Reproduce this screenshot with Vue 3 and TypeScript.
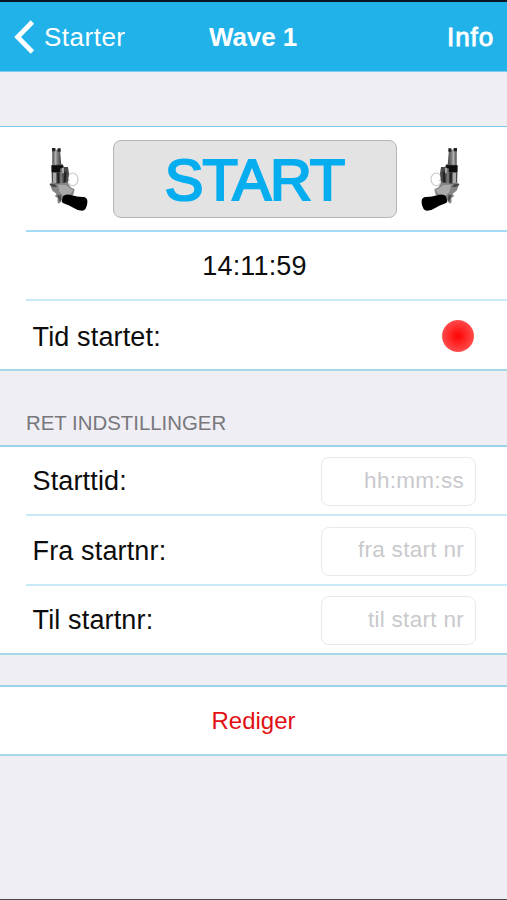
<script setup lang="ts">
import { ref } from 'vue'

interface Field {
  label: string
  hint: string
  cls: string
}

const clock = ref('14:11:59')
const fields: Field[] = [
  { label: 'Starttid:', hint: 'hh:mm:ss', cls: 'f-time' },
  { label: 'Fra startnr:', hint: 'fra start nr', cls: 'f-from' },
  { label: 'Til startnr:', hint: 'til start nr', cls: 'f-to' },
]
const guns = ['left', 'right']
</script>

<template>
  <main class="screen">
    <header class="nav">
      <div class="back">
        <svg class="chevron" viewBox="0 0 22 34"><path d="M18.400 2 3.600 17l14.800 15" /></svg>
        <span class="back-text">Starter</span>
      </div>
      <h1 class="title">Wave 1</h1>
      <span class="info">Info</span>
    </header>

    <section class="group first">
      <div class="row start-row">
        <button class="start"><span>START</span></button>
        <svg v-for="side in guns" :key="side" class="gun" :class="side" viewBox="35 30 129 201">
          <defs>
            <linearGradient :id="'steel-' + side" x1="0" x2="1">
              <stop offset="0" stop-color="#444" />
              <stop offset=".35" stop-color="#b0b0b0" />
              <stop offset=".6" stop-color="#777" />
              <stop offset="1" stop-color="#444" />
            </linearGradient>
            <filter :id="'soft-' + side"><feGaussianBlur stdDeviation="2" /></filter>
          </defs>
          <g :filter="`url(#soft-${side})`">
            <ellipse cx="112" cy="133" rx="16" ry="19" fill="none" stroke="#ccc" stroke-width="3.500" />
            <path d="M97 119q-3 12 5 19" fill="none" stroke="#999" stroke-width="3" />
            <path d="M51 40h8l4 4 11-2 4 50H51z" :fill="`url(#steel-${side})`" />
            <path d="M50 39h10v10H50zM67 40h9v10h-9z" fill="#222" />
            <path d="M48 91l34-3 4 8h12l3 20-5 35-46 3z" fill="#4a4a4a" />
            <path d="M49 91h34v20H49z" fill="#111" />
            <path d="M53 113h10v31H53zM80 98h6v17h-6z" fill="#a9a9a9" />
            <path d="M65 112l7 2v30h-5zM87 108l6 4-2 31-6 3z" fill="#222" />
            <path d="M75 100h5l2 48h-8z" fill="#777" />
            <path d="M43 147l7-5 17 4 29-4 10 15 12 6-4 16-14 7-13 6-9 1-2 9-6 4-4-6 1-10-8-6 4-8-12-9z" fill="#858585" />
            <path d="M68 149l23 1 13 10 10 5-9 13-20 5-12-12z" fill="#a9a9a9" />
            <path d="M42 148l15-2 9 9-13 2zM66 181l9-2 4 16-5 5-4-8z" fill="#484848" />
            <path d="M83 184q8-9 24-4 22 7 39 6 12 3 10 18-3 23-16 23-15-1-26-9-12-8-26-12-12-4-8-11z" fill="#050505" />
          </g>
        </svg>
      </div>
      <div class="row clock-row"><span class="clock">{{ clock }}</span></div>
      <div class="row status-row">
        <span class="label started">Tid startet:</span>
        <i class="dot"></i>
      </div>
    </section>

    <h2 class="section-title"><span>RET INDSTILLINGER</span></h2>

    <section class="group">
      <label v-for="f in fields" :key="f.label" class="row field-row" :class="f.cls">
        <span class="label">{{ f.label }}</span>
        <input class="field" type="text" :placeholder="f.hint" />
      </label>
    </section>

    <section class="group edit"><span>Rediger</span></section>
  </main>
</template>

<style>
body {
  background: #efeef4;
}
</style>

<style scoped>
.screen {
  box-sizing: border-box;
  height: 900px;
  border-top: 2px solid #071522;
  border-bottom: 1px solid #49494d;
  background: #efeef4;
  font-family: "Liberation Sans", Arial, sans-serif;
  color: #0c0c0c;
  overflow: hidden;
}
.nav {
  box-sizing: border-box;
  height: 70px;
  display: grid;
  grid-template-columns: 1fr auto 1fr;
  align-items: center;
  padding: 1px 13px 0 14px;
  background: #21b2e9;
  border-bottom: 1px solid #7fcdea;
  color: #fff;
  font-size: 26px;
}
.back {
  display: flex;
  align-items: center;
  gap: 8px;
}
.chevron {
  width: 22px;
  height: 34px;
}
.chevron path {
  fill: none;
  stroke: #fff;
  stroke-width: 4.8;
}
.back-text {
  letter-spacing: 0.5px;
}
.title {
  margin: 0;
  padding-right: 2px;
  font-size: 26px;
  font-weight: bold;
  letter-spacing: -0.1px;
}
.info {
  justify-self: end;
  -webkit-text-stroke: 0.9px #fff;
  letter-spacing: 0.9px;
}
.group {
  box-sizing: border-box;
  background: #fff;
  border-top: 2px solid #9bd2ea;
  border-bottom: 2px solid #a6d8ea;
}
.first {
  margin-top: 54px;
  border-top-width: 1px;
  border-top-color: #7dc8ea;
}
.row {
  box-sizing: border-box;
  display: flex;
  align-items: center;
  margin-left: 26px;
  border-bottom: 2px solid #c6eaf7;
}
.row:last-child {
  border-bottom: 0;
}
.start-row {
  height: 105px;
  gap: 26px;
  padding-left: 21px;
  padding-top: 1px;
  border-color: #a5dcf3;
}
.gun {
  width: 43px;
  height: 67px;
  margin-top: -2px;
}
.gun.left {
  order: 1;
}
.start {
  order: 2;
  box-sizing: border-box;
  width: 284px;
  height: 78px;
  margin-left: -3px;
  padding: 0 1px 0 0;
  border: 1px solid #b5b5b5;
  border-radius: 8px;
  background: #e3e3e3;
  color: #06adef;
  font: 58px "Liberation Sans", Arial, sans-serif;
  letter-spacing: -1.1px;
  -webkit-text-stroke: 2.2px #06adef;
}
.gun.right {
  order: 3;
  margin-left: -4px;
  transform: scaleX(-1);
}
.clock-row {
  height: 69px;
  justify-content: center;
  padding-right: 24px;
  padding-top: 1px;
  font-size: 27px;
  letter-spacing: 0.15px;
}
.status-row {
  height: 68px;
}
.label {
  padding-left: 6.500px;
  font-size: 27px;
  letter-spacing: 0.15px;
}
.started {
  padding-top: 4px;
}
.dot {
  width: 32px;
  height: 32px;
  margin-top: 1px;
  margin-left: auto;
  margin-right: 33px;
  border-radius: 50%;
  background: radial-gradient(circle, #ff0808 5%, #ff4545 65%, #ff5b5b 72%);
}
.section-title {
  box-sizing: border-box;
  height: 74px;
  margin: 0;
  padding: 40px 0 0 26px;
  color: #77777c;
  font-size: 20.400px;
  font-weight: normal;
  line-height: 24px;
}
.field-row {
  height: 70px;
  padding-top: 2px;
}
.f-time {
  height: 69px;
}
.field-row:last-child {
  height: 67px;
}
.field {
  box-sizing: border-box;
  width: 155px;
  height: 49px;
  margin-left: auto;
  margin-right: 31px;
  padding: 0 11px 2px;
  border: 1px solid #e9e9e9;
  border-radius: 8px;
  background: #fff;
  text-align: right;
  font: 22.500px "Liberation Sans", Arial, sans-serif;
  letter-spacing: 0.3px;
}
.field::placeholder {
  color: #c9c9cd;
  opacity: 1;
}
.edit {
  height: 71px;
  margin-top: 30px;
  display: flex;
  align-items: center;
  justify-content: center;
  color: #e20f12;
  font-size: 24px;
}
</style>
